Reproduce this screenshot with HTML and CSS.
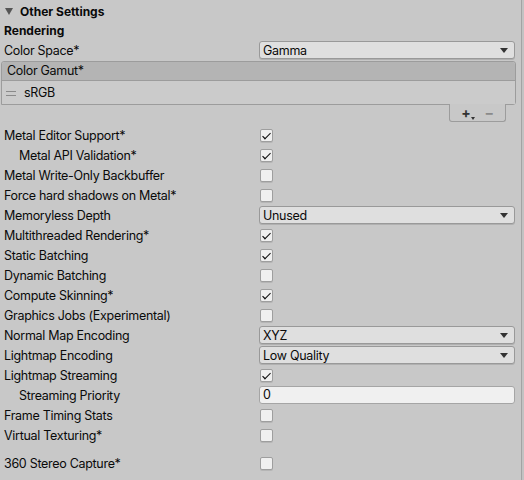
FILE: index.html
```html
<!DOCTYPE html>
<html>
<head>
<meta charset="utf-8">
<link rel="stylesheet" href="styles.css">
</head>
<body>
<div class="window">
  <div class="panel">
    <div class="foldout">
      <span class="fold-arrow"></span>
      <span class="fold-title">Other Settings</span>
    </div>
    <div class="section-title">Rendering</div>

    <div class="row">
      <div class="label">Color Space*</div>
      <div class="control"><div class="dropdown"><span>Gamma</span><span class="arrow"></span></div></div>
    </div>

    <div class="list">
      <div class="list-header">Color Gamut*</div>
      <div class="list-row"><span class="handle"></span><span>sRGB</span></div>
    </div>
    <div class="list-footer-wrap">
      <div class="list-footer">
        <span class="plus">+<span class="mini-arrow"></span></span>
        <span class="minus">−</span>
      </div>
    </div>

    <div class="rows">
      <div class="row"><div class="label">Metal Editor Support*</div><div class="control"><span class="check on"></span></div></div>
      <div class="row"><div class="label indent">Metal API Validation*</div><div class="control"><span class="check on"></span></div></div>
      <div class="row"><div class="label">Metal Write-Only Backbuffer</div><div class="control"><span class="check"></span></div></div>
      <div class="row"><div class="label">Force hard shadows on Metal*</div><div class="control"><span class="check"></span></div></div>
      <div class="row"><div class="label">Memoryless Depth</div><div class="control"><div class="dropdown"><span>Unused</span><span class="arrow"></span></div></div></div>
      <div class="row"><div class="label">Multithreaded Rendering*</div><div class="control"><span class="check on"></span></div></div>
      <div class="row"><div class="label">Static Batching</div><div class="control"><span class="check on"></span></div></div>
      <div class="row"><div class="label">Dynamic Batching</div><div class="control"><span class="check"></span></div></div>
      <div class="row"><div class="label">Compute Skinning*</div><div class="control"><span class="check on"></span></div></div>
      <div class="row"><div class="label">Graphics Jobs (Experimental)</div><div class="control"><span class="check"></span></div></div>
      <div class="row"><div class="label">Normal Map Encoding</div><div class="control"><div class="dropdown"><span>XYZ</span><span class="arrow"></span></div></div></div>
      <div class="row"><div class="label">Lightmap Encoding</div><div class="control"><div class="dropdown"><span>Low Quality</span><span class="arrow"></span></div></div></div>
      <div class="row"><div class="label">Lightmap Streaming</div><div class="control"><span class="check on"></span></div></div>
      <div class="row"><div class="label indent">Streaming Priority</div><div class="control"><div class="textfield">0</div></div></div>
      <div class="row"><div class="label">Frame Timing Stats</div><div class="control"><span class="check"></span></div></div>
      <div class="row"><div class="label">Virtual Texturing*</div><div class="control"><span class="check"></span></div></div>
      <div class="row spaced"><div class="label">360 Stereo Capture*</div><div class="control"><span class="check"></span></div></div>
    </div>
  </div>
  <div class="edge"></div>
</div>
</body>
</html>
```

FILE: styles.css
```css
html, body {
  margin: 0;
  padding: 0;
  background: #c8c8c8;
}
body {
  font-family: Inter, "Noto Sans", sans-serif;
  font-size: 12.5px;
  letter-spacing: -0.3px;
  color: #0a0a0a;
}
.window {
  display: flex;
  width: 524px;
  height: 480px;
  overflow: hidden;
}
.panel {
  flex: 1;
  min-width: 0;
}
.edge {
  width: 2px;
  border-left: 1px solid #a3a3a3;
  background: #c2c2c2;
}
.foldout {
  height: 22px;
  display: flex;
  align-items: center;
  padding-left: 5px;
  font-weight: bold;
  font-size: 12px;
  letter-spacing: 0;
}
.fold-arrow {
  width: 0;
  height: 0;
  border-left: 4px solid transparent;
  border-right: 4px solid transparent;
  border-top: 7px solid #555;
  margin-right: 7px;
}
.section-title {
  height: 18px;
  line-height: 18px;
  padding-left: 4px;
  font-weight: bold;
  font-size: 12px;
  letter-spacing: 0;
}
.row {
  display: flex;
  align-items: center;
  height: 20px;
}
.row.spaced {
  margin-top: 8px;
}
.label {
  width: 259px;
  padding-left: 4px;
  box-sizing: border-box;
  white-space: nowrap;
}
.label.indent {
  padding-left: 19px;
}
.control {
  flex: 1;
  display: flex;
  align-items: center;
  padding-right: 6px;
}
.dropdown {
  flex: 1;
  height: 16px;
  border: 1px solid #999;
  border-radius: 3px;
  background: #dfdfdf;
  display: flex;
  align-items: center;
  justify-content: space-between;
  padding: 0 6px 0 3px;
  box-shadow: 0 1px 0 #b0b0b0;
}
.arrow {
  width: 0;
  height: 0;
  border-left: 4px solid transparent;
  border-right: 4px solid transparent;
  border-top: 5px solid #333;
}
.textfield {
  flex: 1;
  height: 16px;
  line-height: 16px;
  border: 1px solid #a5a5a5;
  border-radius: 3px;
  background: #f0f0f0;
  padding-left: 3px;
}
.check {
  width: 11px;
  height: 11px;
  margin-left: 1px;
  border: 1px solid #9e9e9e;
  border-radius: 2px;
  background: #f0f0f0;
  position: relative;
  box-shadow: 0 1px 0 #b5b5b5;
}
.check.on::after {
  content: "";
  position: absolute;
  left: 2px;
  top: 1px;
  width: 6px;
  height: 3px;
  border-left: 1.6px solid #111;
  border-bottom: 1.6px solid #111;
  transform: translate(0, 2px) rotate(-45deg) scaleX(1.2);
  transform-origin: center;
}
.list {
  margin: 1px 5px 0 1px;
  border: 1px solid #9c9c9c;
  border-radius: 3px 3px 3px 0;
}
.list-header {
  height: 18px;
  line-height: 18px;
  background: #b4b4b4;
  border-bottom: 1px solid #9c9c9c;
  padding-left: 5px;
  border-radius: 3px 3px 0 0;
}
.list-row {
  height: 23px;
  display: flex;
  align-items: center;
  padding-left: 4px;
  background: #cbcbcb;
}
.handle {
  width: 10px;
  height: 3px;
  border-top: 1px solid #8a8a8a;
  border-bottom: 1px solid #8a8a8a;
  margin-right: 8px;
  margin-top: 2px;
}
.list-footer-wrap {
  display: flex;
  justify-content: flex-end;
  padding-right: 15px;
}
.list-footer {
  width: 55px;
  height: 17px;
  border: 1px solid #9c9c9c;
  border-top: none;
  border-radius: 0 0 3px 3px;
  margin-top: -1px;
  background: #c8c8c8;
  display: flex;
  align-items: center;
  justify-content: center;
  gap: 14px;
  font-size: 14px;
  font-weight: bold;
}
.plus {
  color: #333;
  position: relative;
  line-height: 14px;
}
.mini-arrow {
  position: absolute;
  right: -4px;
  bottom: 0;
  width: 0;
  height: 0;
  border-left: 2px solid transparent;
  border-right: 2px solid transparent;
  border-top: 3px solid #333;
}
.minus {
  color: #8a8a8a;
  line-height: 14px;
}
.rows {
  margin-top: 3px;
}
```
